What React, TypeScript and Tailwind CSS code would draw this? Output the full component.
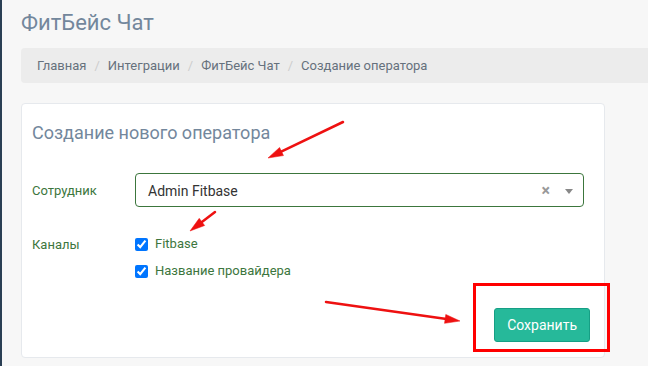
import React from "react";

type Arrow = { x1: number; y1: number; x2: number; y2: number };

const arrows: Arrow[] = [
  { x1: 343, y1: 122, x2: 268, y2: 158 },
  { x1: 215, y1: 212, x2: 190, y2: 231 },
  { x1: 326, y1: 302, x2: 460, y2: 321 },
];

function head({ x1, y1, x2, y2 }: Arrow, len = 15, half = 4.5) {
  const dx = x2 - x1;
  const dy = y2 - y1;
  const d = Math.hypot(dx, dy);
  const ux = dx / d;
  const uy = dy / d;
  const bx = x2 - ux * len;
  const by = y2 - uy * len;
  return `${x2},${y2} ${bx - uy * half},${by + ux * half} ${bx + uy * half},${by - ux * half}`;
}

function Annotations() {
  return (
    <svg className="pointer-events-none absolute inset-0" width={648} height={366}>
      {arrows.map((a, i) => {
        const d = Math.hypot(a.x2 - a.x1, a.y2 - a.y1);
        const ex = a.x2 - ((a.x2 - a.x1) / d) * 10;
        const ey = a.y2 - ((a.y2 - a.y1) / d) * 10;
        return (
          <g key={i} fill="#ee1111" stroke="#ee1111">
            <line x1={a.x1} y1={a.y1} x2={ex} y2={ey} strokeWidth={2.5} strokeLinecap="round" />
            <polygon points={head(a)} strokeWidth={0.5} />
          </g>
        );
      })}
    </svg>
  );
}

function Channel({ label }: { label: string }) {
  return (
    <label className="flex h-[27px] items-start gap-[7px]">
      <input
        type="checkbox"
        checked
        readOnly
        className="m-0 mt-[4px] h-[13px] w-[13px] accent-[#0075ff]"
      />
      <span className="text-[13px] leading-[20px] text-[#3c763d]">{label}</span>
    </label>
  );
}

export default function App() {
  const crumbs = ["Главная", "Интеграции", "ФитБейс Чат", "Создание оператора"];
  return (
    <div className="relative flex h-[366px] w-[648px] overflow-hidden bg-[#f7f7f7] font-['Roboto','Liberation_Sans',sans-serif]">
      <div className="w-[2px] shrink-0 bg-[#2a3f54]" />
      <main className="flex min-w-0 flex-1 flex-col pl-[19px] pt-[10px]">
        <h3 className="text-[22px] leading-[26px] text-[#73879c]">ФитБейс Чат</h3>

        <nav className="mt-[12px] flex h-[35px] w-[700px] items-center rounded-[4px] bg-[#ececec] pl-[16px] text-[13px] text-[#66717d]">
          {crumbs.map((c, i) => (
            <React.Fragment key={c}>
              {i > 0 && <span className="px-[8px] text-[#cccccc]">/</span>}
              <span>{c}</span>
            </React.Fragment>
          ))}
        </nav>

        <section className="mt-[20px] w-[584px] rounded-[4px] border border-[#e6e9ed] bg-white pb-[15px] pl-[10px] pr-[14px] pt-[17px]">
          <h2 className="text-[18px] leading-[24px] text-[#73879c]">Создание нового оператора</h2>

          <div className="mt-[28px] flex">
            <div className="w-[103px] shrink-0 pt-[9px] text-[13px] leading-[18px] text-[#3c763d]">
              Сотрудник
            </div>
            <div className="flex h-[34px] w-[449px] items-start rounded-[4px] border border-[#3c763d] pl-[12px] pr-[10px] pt-[7px]">
              <span className="flex-1 text-[14px] leading-[20px] text-[#333333]">Admin Fitbase</span>
              <span className="mr-[15px] text-[16px] font-bold leading-[20px] text-[#999999]">×</span>
              <span className="mt-[8px] h-0 w-0 border-x-[4px] border-t-[5px] border-x-transparent border-t-[#888888]" />
            </div>
          </div>

          <div className="mt-[27px] flex">
            <div className="w-[103px] shrink-0 pt-[1px] text-[13px] leading-[20px] text-[#3c763d]">
              Каналы
            </div>
            <div className="flex flex-col">
              <Channel label="Fitbase" />
              <Channel label="Название провайдера" />
            </div>
          </div>

          <div className="mt-[20px] flex justify-end">
            <button className="h-[34px] rounded-[3px] border border-[#169f85] bg-[#26b99a] px-[12px] text-[14px] leading-[20px] text-white">
              Сохранить
            </button>
          </div>
        </section>
      </main>

      <div className="pointer-events-none absolute left-[473px] top-[283px] h-[69px] w-[137px] border-[3px] border-[#ff0000]" />
      <Annotations />
    </div>
  );
}
